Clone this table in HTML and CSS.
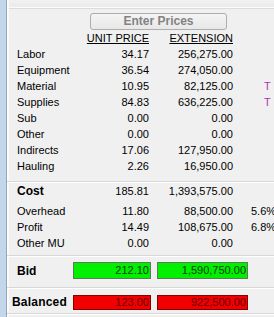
FILE: index.html
```html
<!DOCTYPE html>
<html>
<head>
<meta charset="utf-8">
<link rel="stylesheet" href="styles.css">
</head>
<body>
<div class="window">
  <div class="side"></div>
  <div class="panel">
    <div class="topbar"></div>
    <div class="btnrow"><div class="enter">Enter Prices</div></div>
    <div class="row head"><span></span><span class="num">UNIT PRICE</span><span class="num ext">EXTENSION</span><span></span></div>
    <div class="row"><span class="lbl">Labor</span><span class="num">34.17</span><span class="num ext">256,275.00</span><span></span></div>
    <div class="row"><span class="lbl">Equipment</span><span class="num">36.54</span><span class="num ext">274,050.00</span><span></span></div>
    <div class="row"><span class="lbl">Material</span><span class="num">10.95</span><span class="num ext">82,125.00</span><span class="flag">T</span></div>
    <div class="row"><span class="lbl">Supplies</span><span class="num">84.83</span><span class="num ext">636,225.00</span><span class="flag">T</span></div>
    <div class="row"><span class="lbl">Sub</span><span class="num">0.00</span><span class="num ext">0.00</span><span></span></div>
    <div class="row"><span class="lbl">Other</span><span class="num">0.00</span><span class="num ext">0.00</span><span></span></div>
    <div class="row"><span class="lbl">Indirects</span><span class="num">17.06</span><span class="num ext">127,950.00</span><span></span></div>
    <div class="row"><span class="lbl">Hauling</span><span class="num">2.26</span><span class="num ext">16,950.00</span><span></span></div>
    <div class="sep sep-cost"></div>
    <div class="row"><span class="lbl bold">Cost</span><span class="num">185.81</span><span class="num ext">1,393,575.00</span><span></span></div>
    <div class="row first-mu"><span class="lbl">Overhead</span><span class="num">11.80</span><span class="num ext">88,500.00</span><span class="pct">5.6%</span></div>
    <div class="row"><span class="lbl">Profit</span><span class="num">14.49</span><span class="num ext">108,675.00</span><span class="pct">6.8%</span></div>
    <div class="row"><span class="lbl">Other MU</span><span class="num">0.00</span><span class="num ext">0.00</span><span></span></div>
    <div class="sep sep-mu"></div>
    <div class="row boxrow"><span class="lbl bold">Bid</span><span class="box green">212.10</span><span class="box green wide">1,590,750.00</span><span></span></div>
    <div class="sep sep-bid"></div>
    <div class="row boxrow red-row"><span class="lbl bold balanced">Balanced</span><span class="box red">123.00</span><span class="box red wide">922,500.00</span><span></span></div>
    <div class="sep sep-bal"></div>
  </div>
</div>
</body>
</html>
```

FILE: styles.css
```css
html, body {
  margin: 0;
  padding: 0;
  background: #f0f0f0;
}
body {
  width: 274px;
  height: 317px;
  overflow: hidden;
  font-family: "Liberation Sans", Arial, sans-serif;
  font-size: 11px;
  color: #000;
}
.window {
  display: flex;
  height: 317px;
}
.side {
  width: 6px;
  flex: none;
  background: #c3d6ea;
  border-right: 1px solid #8ea6c0;
  box-shadow: 1px 0 0 #ffffff, 2px 0 0 #fafafa;
}
.panel {
  flex: 1;
  display: flex;
  flex-direction: column;
  padding-left: 2px;
}
.topbar {
  height: 9px;
  border-top: 3px solid #f0f0f0;
  box-sizing: border-box;
  background: #ececec;
  border-bottom: 1px solid #dcdcdc;
  box-shadow: 0 -1px 0 #fbfbfb inset;
}
.btnrow {
  display: flex;
  padding-left: 81px;
  margin-top: 4px;
}
.enter {
  width: 135px;
  height: 15px;
  border: 1px solid #adadad;
  border-radius: 3px;
  background: linear-gradient(#f4f4f4, #e8e8e8);
  color: #838383;
  font-weight: bold;
  font-size: 12px;
  line-height: 15px;
  text-align: center;
}
.row {
  display: grid;
  grid-template-columns: 64px 78px 97px 1fr;
  height: 16px;
  line-height: 16px;
  align-items: center;
}
.lbl {
  padding-left: 8px;
  white-space: nowrap;
}
.bold {
  font-weight: bold;
  font-size: 12px;
}
.balanced {
  padding-left: 3px;
  letter-spacing: 0.2px;
}
.num {
  text-align: right;
  padding-right: 2px;
  white-space: nowrap;
}
.num.ext {
  padding-right: 15px;
}
.head .num {
  text-decoration: underline;
  text-underline-offset: 1px;
}
.head .num:first-of-type {
  padding-right: 3px;
}
.flag {
  color: #b82fb8;
  padding-left: 16px;
}
.pct {
  padding-left: 3px;
}
.sep {
  height: 0;
  border-top: 1px solid #d8d8d8;
  border-bottom: 1px solid #ffffff;
  margin-left: -2px;
}
.sep-cost { margin-top: 7px; }
.first-mu { margin-top: 4px; }
.sep-mu { margin-top: 4px; }
.sep-bid { margin-top: 8px; }
.sep-bal { margin-top: 4px; }
.boxrow {
  height: 17px;
  margin-top: 5px;
}
.red-row {
  height: 15px;
  margin-top: 5px;
}
.box {
  display: block;
  box-sizing: border-box;
  text-align: right;
  padding-right: 1px;
  white-space: nowrap;
}
.box.wide {
  margin-left: 6px;
  width: 91px;
}
.green {
  height: 17px;
  line-height: 15px;
  background: #00f000;
  border: 1px solid #5c7a5c;
  color: #0c3a0c;
}
.red {
  height: 15px;
  line-height: 13px;
  background: #f00000;
  border: 1px solid #8a0000;
  color: #6a0000;
}
```
